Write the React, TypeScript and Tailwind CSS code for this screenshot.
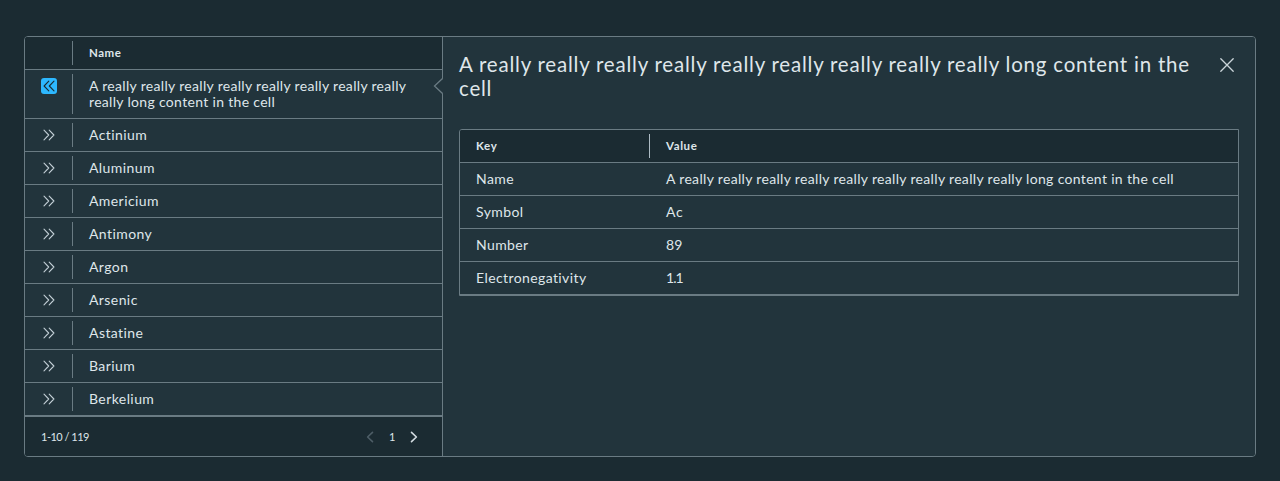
const LINE = 'border-[#6a7b83]';

const elements = [
  'Actinium',
  'Aluminum',
  'Americium',
  'Antimony',
  'Argon',
  'Arsenic',
  'Astatine',
  'Barium',
  'Berkelium',
];

const details = [
  { key: 'Name', value: 'A really really really really really really really really really long content in the cell', spacing: 'tracking-[0.33px]' },
  { key: 'Symbol', value: 'Ac', spacing: 'tracking-[0.8px]' },
  { key: 'Number', value: '89', spacing: 'tracking-[0.2px]' },
  { key: 'Electronegativity', value: '1.1', spacing: 'tracking-[-0.9px]' },
];

function DoubleAngle({ flip = false }: { flip?: boolean }) {
  return (
    <svg
      viewBox="0 0 16 16"
      className={flip ? 'size-4 -scale-x-100' : 'size-4'}
      fill="none"
      stroke="currentColor"
      strokeWidth="1.1"
      strokeLinecap="round"
      strokeLinejoin="round"
    >
      <path d="M3 3.2 7.7 8 3 12.8M8.2 3.2 12.9 8l-4.7 4.8" />
    </svg>
  );
}

function PageArrow({ flip = false }: { flip?: boolean }) {
  return (
    <svg
      viewBox="0 0 16 16"
      className={flip ? 'size-4 -scale-x-100' : 'size-4'}
      fill="none"
      stroke="currentColor"
      strokeWidth="1.6"
      strokeLinecap="round"
      strokeLinejoin="round"
    >
      <path d="M5.5 3.3 10.4 8l-4.9 4.7" />
    </svg>
  );
}

export default function App() {
  return (
    <main className="h-[481px] bg-[#1b2b32] px-6 pt-9 font-['Lato','Open_Sans',sans-serif] text-[14px] leading-4 text-[#dfe6ea]">
      <div className={`relative flex h-[421px] w-[1232px] overflow-hidden rounded-[4px] border ${LINE}`}>
        <section className="flex w-[417px] shrink-0 flex-col bg-[#22343c]">
          <div className={`flex h-[33px] items-center border-b bg-[#1b2b32] ${LINE}`}>
            <div className={`h-6 w-12 border-r ${LINE}`} />
            <div className="pl-4 text-[11.5px] font-bold tracking-[0.5px]">Name</div>
          </div>
          <div className={`flex h-[49px] border-b ${LINE}`}>
            <div className={`my-1 w-12 border-r pt-1 pl-4 ${LINE}`}>
              <button className="block size-4 rounded-[3px] bg-[#2db8ff] text-[#1b2b32]" aria-label="Close details">
                <DoubleAngle flip />
              </button>
            </div>
            <div className="pt-2 pl-4 whitespace-nowrap tracking-[0.32px]">
              A really really really really really really really really
              <br />
              really long content in the cell
            </div>
          </div>
          {elements.map((name) => (
            <div key={name} className={`flex h-[33px] items-center border-b ${LINE}`}>
              <div className={`flex h-6 w-12 items-center border-r pl-4 text-[#c1cdd4] ${LINE}`}>
                <DoubleAngle />
              </div>
              <div className="pl-4 tracking-[0.42px]">{name}</div>
            </div>
          ))}
          <footer className={`flex flex-1 items-center border-t bg-[#1b2b32] px-4 text-[11px] tracking-[-0.5px] ${LINE}`}>
            <span>1-10 / 119</span>
            <span className="ml-auto text-[#4d5d66]">
              <PageArrow flip />
            </span>
            <span className="w-7 text-center">1</span>
            <span className="mr-1 text-[#d3dce1]">
              <PageArrow />
            </span>
          </footer>
        </section>

        <section className={`flex flex-1 flex-col border-l bg-[#22343c] pr-4 pl-4 ${LINE}`}>
          <header className="flex h-[92px] justify-between pt-[15px]">
            <h1 className="text-[20.5px] leading-6 whitespace-nowrap tracking-[0.78px]">
              A really really really really really really really really really long content in the
              <br />
              cell
            </h1>
            <svg viewBox="0 0 24 24" className="mt-px size-6" fill="none" stroke="#cbd5da" strokeWidth="1.3" strokeLinecap="round">
              <path d="m5.8 5.8 12.4 12.4M18.2 5.8 5.8 18.2" />
            </svg>
          </header>
          <div className={`rounded-tl-[3px] border ${LINE}`}>
            <div className={`flex h-[33px] items-center rounded-tl-[2px] border-b bg-[#1b2b32] text-[11.5px] font-bold tracking-[0.6px] ${LINE}`}>
              <div className="flex h-6 w-[190px] items-center border-r border-[#adbbc4] pl-4">Key</div>
              <div className="pl-4">Value</div>
            </div>
            {details.map(({ key, value, spacing }) => (
              <div key={key} className={`flex h-[33px] items-center border-b ${LINE}`}>
                <div className="w-[190px] pl-4 tracking-[0.4px]">{key}</div>
                <div className={`pl-4 ${spacing}`}>{value}</div>
              </div>
            ))}
          </div>
        </section>

        <svg viewBox="0 0 10 16" className="absolute top-[41px] left-[408px] h-4 w-[10px]" fill="none">
          <path d="M10 0.5 1.5 8 10 15.5Z" fill="#22343c" />
          <path d="M9.5 0.5 1.5 8l8 7.5" stroke="#6a7b83" strokeWidth="1.3" />
        </svg>
      </div>
    </main>
  );
}
